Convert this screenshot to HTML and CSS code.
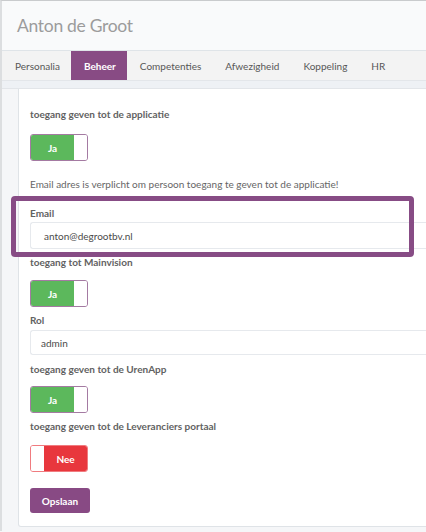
FILE: index.html
```html
<!DOCTYPE html>
<html lang="nl">
<head>
<meta charset="utf-8">
<title>Anton de Groot</title>
<link rel="stylesheet" href="styles.css">
</head>
<body>
<div class="page">
  <header class="title-bar">
    <h1 class="title">Anton de Groot</h1>
  </header>
  <nav class="tabs">
    <span class="tab">Personalia</span>
    <span class="tab tab-active">Beheer</span>
    <span class="tab">Competenties</span>
    <span class="tab">Afwezigheid</span>
    <span class="tab">Koppeling</span>
    <span class="tab">HR</span>
  </nav>
  <div class="band"></div>
  <main class="content">
    <section class="card">
      <div class="label l1">toegang geven tot de applicatie</div>
      <div class="toggle on t1"><span class="toggle-fill">Ja</span><span class="knob"></span></div>
      <div class="note">Email adres is verplicht om persoon toegang te geven tot de applicatie!</div>
      <div class="email-group">
        <div class="highlight"></div>
        <div class="label l-email">Email</div>
        <div class="input input-email">anton@degrootbv.nl</div>
      </div>
      <div class="label l-main">toegang tot Mainvision</div>
      <div class="toggle on t2"><span class="toggle-fill">Ja</span><span class="knob"></span></div>
      <div class="label l-rol">Rol</div>
      <div class="input input-rol">admin</div>
      <div class="label l-uren">toegang geven tot de UrenApp</div>
      <div class="toggle on t3"><span class="toggle-fill">Ja</span><span class="knob"></span></div>
      <div class="label l-lev">toegang geven tot de Leveranciers portaal</div>
      <div class="toggle off t4"><span class="knob"></span><span class="toggle-fill">Nee</span></div>
      <button class="btn-save">Opslaan</button>
    </section>
  </main>
</div>
</body>
</html>
```
FILE: styles.css
```css
html, body {
  margin: 0;
  padding: 0;
  overflow: hidden;
}
body {
  background: #f5f6f8;
  font-family: Lato, "Open Sans", sans-serif;
  color: #555;
}
.page {
  border-top: 1px solid #c9cbcd;
  border-left: 2px solid #dcdee0;
  min-height: 531px;
  box-sizing: border-box;
}
.title-bar {
  height: 49px;
  background: #f9fafb;
  border-bottom: 1px solid #dfe4e8;
  display: flex;
  align-items: center;
  padding-left: 15px;
}
.title {
  margin: 0;
  font-weight: 400;
  font-size: 17.5px;
  color: #9c9c9c;
  letter-spacing: -0.3px;
}
.tabs {
  display: flex;
  height: 29px;
  background: #f3f3f3;
  border-bottom: 1px solid #e3e6ea;
}
.tab {
  display: flex;
  align-items: center;
  padding: 0 11px 0 13px;
  font-size: 10px;
  color: #575757;
}
.tab-active {
  background: #884b84;
  color: #fff;
  font-weight: 700;
}
.band {
  height: 7px;
  background: #eef1f5;
  border-bottom: 1px solid #e2e5e9;
}
.content {
  padding-left: 16px;
}
.card {
  width: 460px;
  background: #fff;
  border: 1px solid #dfe3e7;
  border-top: none;
  border-radius: 0 0 0 3px;
  padding: 18px 0 13px 11px;
  box-sizing: border-box;
}
.label {
  font-size: 10px;
  line-height: 14px;
  font-weight: 700;
  color: #626262;
}
.note {
  font-size: 10px;
  line-height: 14px;
  color: #666;
  margin-top: 16px;
}
.toggle {
  display: flex;
  width: 58px;
  height: 27px;
  box-sizing: border-box;
  border-radius: 3px;
  overflow: hidden;
}
.toggle.on {
  border: 1px solid #a47aa2;
}
.toggle.off {
  border: 1px solid #f07b7f;
}
.toggle-fill {
  flex: 1;
  display: flex;
  align-items: center;
  justify-content: center;
  font-size: 10px;
  font-weight: 700;
  color: #fff;
}
.on .toggle-fill { background: #5cb85c; }
.off .toggle-fill { background: #e8373d; }
.knob {
  width: 13px;
  background: #fff;
}
.t1 { margin-top: 13px; }
.email-group {
  position: relative;
  margin-top: 15px;
}
.highlight {
  position: absolute;
  left: -19px;
  top: -10px;
  width: 403px;
  height: 61px;
  border: 5px solid #874c85;
  border-radius: 4px;
  box-sizing: border-box;
  z-index: 2;
}
.input {
  border: 1px solid #e6e9ed;
  border-right: none;
  border-radius: 3px 0 0 3px;
  display: flex;
  align-items: center;
  font-size: 10px;
  color: #4a4a4a;
  box-sizing: border-box;
}
.input-email {
  margin-top: 2px;
  height: 27px;
  padding-left: 13px;
}
.l-main { margin-top: 6px; }
.t2 { margin-top: 11px; }
.l-rol { margin-top: 6px; }
.input-rol {
  margin-top: 3px;
  height: 25px;
  padding-left: 10px;
}
.l-uren { margin-top: 7px; }
.t3 { margin-top: 10px; }
.l-lev { margin-top: 6px; }
.t4 { margin-top: 12px; }
.btn-save {
  display: block;
  margin-top: 16px;
  width: 60px;
  height: 25px;
  border: none;
  border-radius: 3px;
  background: #884a84;
  color: #fff;
  font-family: Lato, "Open Sans", sans-serif;
  font-size: 10px;
  font-weight: 700;
  padding: 0;
}
```
